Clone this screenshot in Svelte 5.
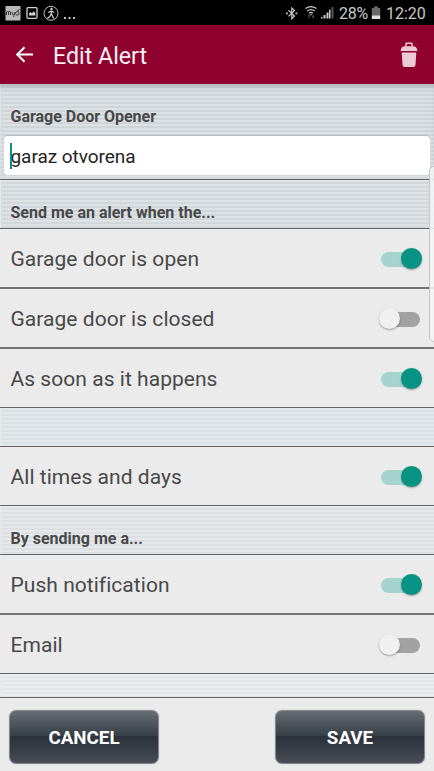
<script>
  let switches = $state({ open: true, closed: false, soon: true, always: true, push: true, email: false });
  let name = $state('garaz otvorena');
</script>

{#snippet row(key, label, strong = false)}
  <div class="row" class:strong>
    <span>{label}</span>
    <button class="switch" class:on={switches[key]} role="switch" aria-checked={switches[key]} aria-label={label} onclick={() => (switches[key] = !switches[key])}>
      <i></i>
    </button>
  </div>
{/snippet}

<div class="screen">
  <div class="status">
    <svg class="notes" width="80" height="25" viewBox="0 0 80 25">
      <rect x="5.500" y="6" width="15" height="14.500" fill="#b9b9b9" />
      <path d="M6.500 15v-3q1.500-1.500 2 0v3m0-3q1.500-1.500 2 0v3M12 12l1 3m2-3-1.500 5M15.500 13.500q0-2 1.800-2t1.700 2-1.700 1.700-1.800-1.700M17.200 11l2.500-1.500" fill="none" stroke="#333" stroke-width="1" />
      <rect x="27" y="7.700" width="10" height="10.600" rx="1" fill="none" stroke="#d2d2d2" stroke-width="1.300" />
      <path d="M29 15.500v-2l1.500-1.500 1.500 1.300 1.800-2 1.500 2v2.200z" fill="#d2d2d2" />
      <circle cx="51" cy="13.300" r="7" fill="none" stroke="#bdbdbd" stroke-width="1" />
      <circle cx="51.500" cy="8.900" r="1.200" fill="#d2d2d2" />
      <path d="M51.300 10.500v3l2.500 5M51.300 13.500l-1.500 3-2.500 2M48.300 12.500l3-1.500 3 1.500" fill="none" stroke="#d2d2d2" stroke-width="1.200" />
      <path d="M64 17h2v2h-2zM68.500 17h2v2h-2zM73 17h2v2h-2z" fill="#bdbdbd" />
    </svg>
    <div class="right">
      <svg width="50" height="25" viewBox="285 0 50 25">
        <path d="m288.500 10.300 6 5.700-2.700 2.700V8l2.700 2.500-6 5.900" fill="none" stroke="#c8c8c8" stroke-width="1.200" />
        <path d="M286 12.500h1.800v1.800H286zM295.500 12.500h1.800v1.800h-1.800z" fill="#c8c8c8" />
        <g fill="none" stroke="#c8c8c8" stroke-width="1.200">
          <path d="M305.500 8.600q5.500-4 11 0M307.200 11q3.800-2.800 7.600 0M309 13.200q2-1.500 4 0" />
        </g>
        <path d="M310 14h2l-1 1.800z" fill="#c8c8c8" />
        <path d="m307.500 16.200 1.500-1.700 1.500 1.700h-1v2.300h-1v-2.300zM311.700 16.500h1v-2h1v2h1l-1.500 2z" fill="#555" />
        <path d="M321 18.500v-1.600h1.500v1.600zM323.500 18.500v-3.500h2v3.500zM326.500 18.500v-6h2v6zM329 18.500v-9h1.500v9z" fill="#c8c8c8" />
        <path d="M331.500 7h2v11.500h-2z" fill="#555" />
      </svg>
      <span class="pct">28%</span>
      <svg class="batt" width="10" height="14" viewBox="0 0 10 14">
        <path d="M3 .5h4v1.500h2.200V10H.8V2H3z" fill="#686868" />
        <path d="M.8 9.500h8.400V13H.8z" fill="#e2e2e2" />
      </svg>
      <span class="time">12:20</span>
    </div>
  </div>

  <header>
    <svg class="back" width="20" height="18" viewBox="0 0 20 18">
      <path d="M18 8.500H2.500M9.500 1.200 2.200 8.500l7.300 7.300" fill="none" stroke="#fff" stroke-width="2" />
    </svg>
    <h1>Edit Alert</h1>
    <svg class="trash" width="18" height="26" viewBox="0 0 18 26">
      <path d="M6 4.500V1.700q0-.5.500-.5h5q.5 0 .5.500v2.800" fill="none" stroke="#ebc9d5" stroke-width="1.500" />
      <path d="M.7 9Q.7 4.300 5 4.300h8Q17.300 4.300 17.300 9z" fill="#ebc9d5" />
      <path d="M1.700 10.500h14.600l-.8 12.500q-.2 2-2.200 2H4.700q-2 0-2.200-2z" fill="#ebc9d5" />
    </svg>
  </header>

  <main>
    <section class="stripes name">
      <h2>Garage Door Opener</h2>
      <label class="field"><input bind:value={name} aria-label="Alert name" /><i class="caret"></i></label>
    </section>
    <section class="stripes when"><h2>Send me an alert when the...</h2></section>
    {@render row('open', 'Garage door is open', true)}
    {@render row('closed', 'Garage door is closed', true)}
    {@render row('soon', 'As soon as it happens')}
    <section class="stripes gap"></section>
    {@render row('always', 'All times and days')}
    <section class="stripes send"><h2>By sending me a...</h2></section>
    {@render row('push', 'Push notification', true)}
    {@render row('email', 'Email')}
    <section class="stripes end"></section>
  </main>

  <footer>
    <button>CANCEL</button>
    <button>SAVE</button>
  </footer>
  <div class="edge-panel"></div>
</div>

<style>
  :global(body) { background: #ebebeb; }
  * { box-sizing: border-box; }
  .screen {
    position: relative;
    width: 434px;
    height: 771px;
    overflow: hidden;
    display: flex;
    flex-direction: column;
    background: #ebebeb;
    color: #484848;
    font-family: Roboto, sans-serif;
  }
  .status {
    height: 25px;
    flex: none;
    display: flex;
    justify-content: space-between;
    background: #000;
    color: #c8c8c8;
    font-size: 16px;
  }
  .right { display: flex; align-items: center; height: 25px; padding-right: 8px; }
  .right span { line-height: 27px; padding-top: 2px; }
  .pct { margin-left: 4px; width: 30px; letter-spacing: -0.2px; }
  .batt { margin-left: 2px; margin-right: 5px; }
  .time { width: 40px; }
  header {
    height: 59px;
    flex: none;
    display: flex;
    align-items: center;
    padding: 0 16px 0 15px;
    background: #8f022f;
    color: #fbeff3;
  }
  h1 { margin: 3px 0 0 18px; font-size: 23.200px; line-height: 28px; font-weight: 400; flex: 1; }
  .back { margin-top: 1px; }
  main { flex: none; }
  .stripes {
    border-bottom: 1px solid #666;
    padding: 0 4px 0 10.500px;
    background-image: repeating-linear-gradient(to bottom, rgba(255, 255, 255, 0.28) 0 2px, transparent 2px 4px);
    background-color: #d5dade;
    box-shadow: inset 1px 0 #e7eaec;
  }
  h2 { margin: 0; font-size: 16px; line-height: 20px; font-weight: 700; white-space: nowrap; }
  .name {
    height: 96px;
    padding: 23px 4px 0 4px;
    background-color: #cfd5d9;
    box-shadow: inset 0 5px 5px -3px rgba(80, 90, 100, 0.4), inset 1px 0 #e2e5e8;
  }
  .name h2 { padding-left: 6.500px; letter-spacing: -0.02px; }
  .when { height: 49px; padding-top: 23px; background-color: #d1d7db; }
  .gap { height: 39px; background-color: #dae0e3; }
  .send { height: 49px; padding-top: 23px; background-color: #dde0e3; }
  .end { height: 24px; background-color: #e2e4e6; }
  .field {
    position: relative;
    display: block;
    height: 39px;
    margin-top: 9px;
    background: #fff;
    border-radius: 4px;
    box-shadow: 0 -1px 1px #b4bac0;
  }
  input {
    width: 100%;
    height: 41px;
    border: 0;
    outline: 0;
    padding: 0 6.500px;
    background: transparent;
    color: #242424;
    font: 400 19px/39px Roboto, sans-serif;
    letter-spacing: -0.05px;
  }
  .caret { position: absolute; left: 6px; top: 7px; width: 2px; height: 26px; background: #079282; }
  .row {
    height: 59px;
    display: flex;
    align-items: center;
    justify-content: space-between;
    padding: 2px 13px 0 10.500px;
    border-bottom: 1px solid #666;
    background: #ebebeb;
    font-size: 21px;
    line-height: 28px;
    letter-spacing: 0.04px;
  }
  .row.strong { height: 60px; border-bottom: 2px solid #747474; }
  .switch {
    position: relative;
    flex: none;
    width: 42px;
    height: 24px;
    margin-top: -1px;
    padding: 0;
    border: 0;
    background: transparent;
  }
  .switch::before {
    content: '';
    position: absolute;
    left: 2px;
    top: 5px;
    width: 39px;
    height: 15px;
    border-radius: 8px;
    background: #a2a2a2;
  }
  .switch i {
    position: absolute;
    left: 0;
    top: 1px;
    width: 21px;
    height: 21px;
    border-radius: 50%;
    background: #f0f0f0;
    box-shadow: 0 1px 2px rgba(0, 0, 0, 0.35);
  }
  .switch.on::before { background: #a5d4ce; }
  .switch.on i { left: 21.500px; background: #079384; }
  footer { flex: 1; display: flex; justify-content: space-between; padding: 12px 9px 0; }
  footer button {
    width: 150px;
    height: 54px;
    border: 1px solid #85888c;
    border-radius: 7px;
    padding: 1px 0 0;
    color: #fff;
    font: 700 18.800px/22px Roboto, sans-serif;
    background: linear-gradient(#696e75, #4d545b 25%, #373f47 48%, #2b323b 49%, #393f49 78%, #4a4d54);
    box-shadow: 0 0 1px #888;
  }
  .edge-panel {
    position: absolute;
    left: 429px;
    top: 166px;
    width: 12px;
    height: 176px;
    border: 1px solid #c2c4c5;
    border-radius: 5px;
    background: rgba(245, 245, 245, 0.85);
  }
</style>
